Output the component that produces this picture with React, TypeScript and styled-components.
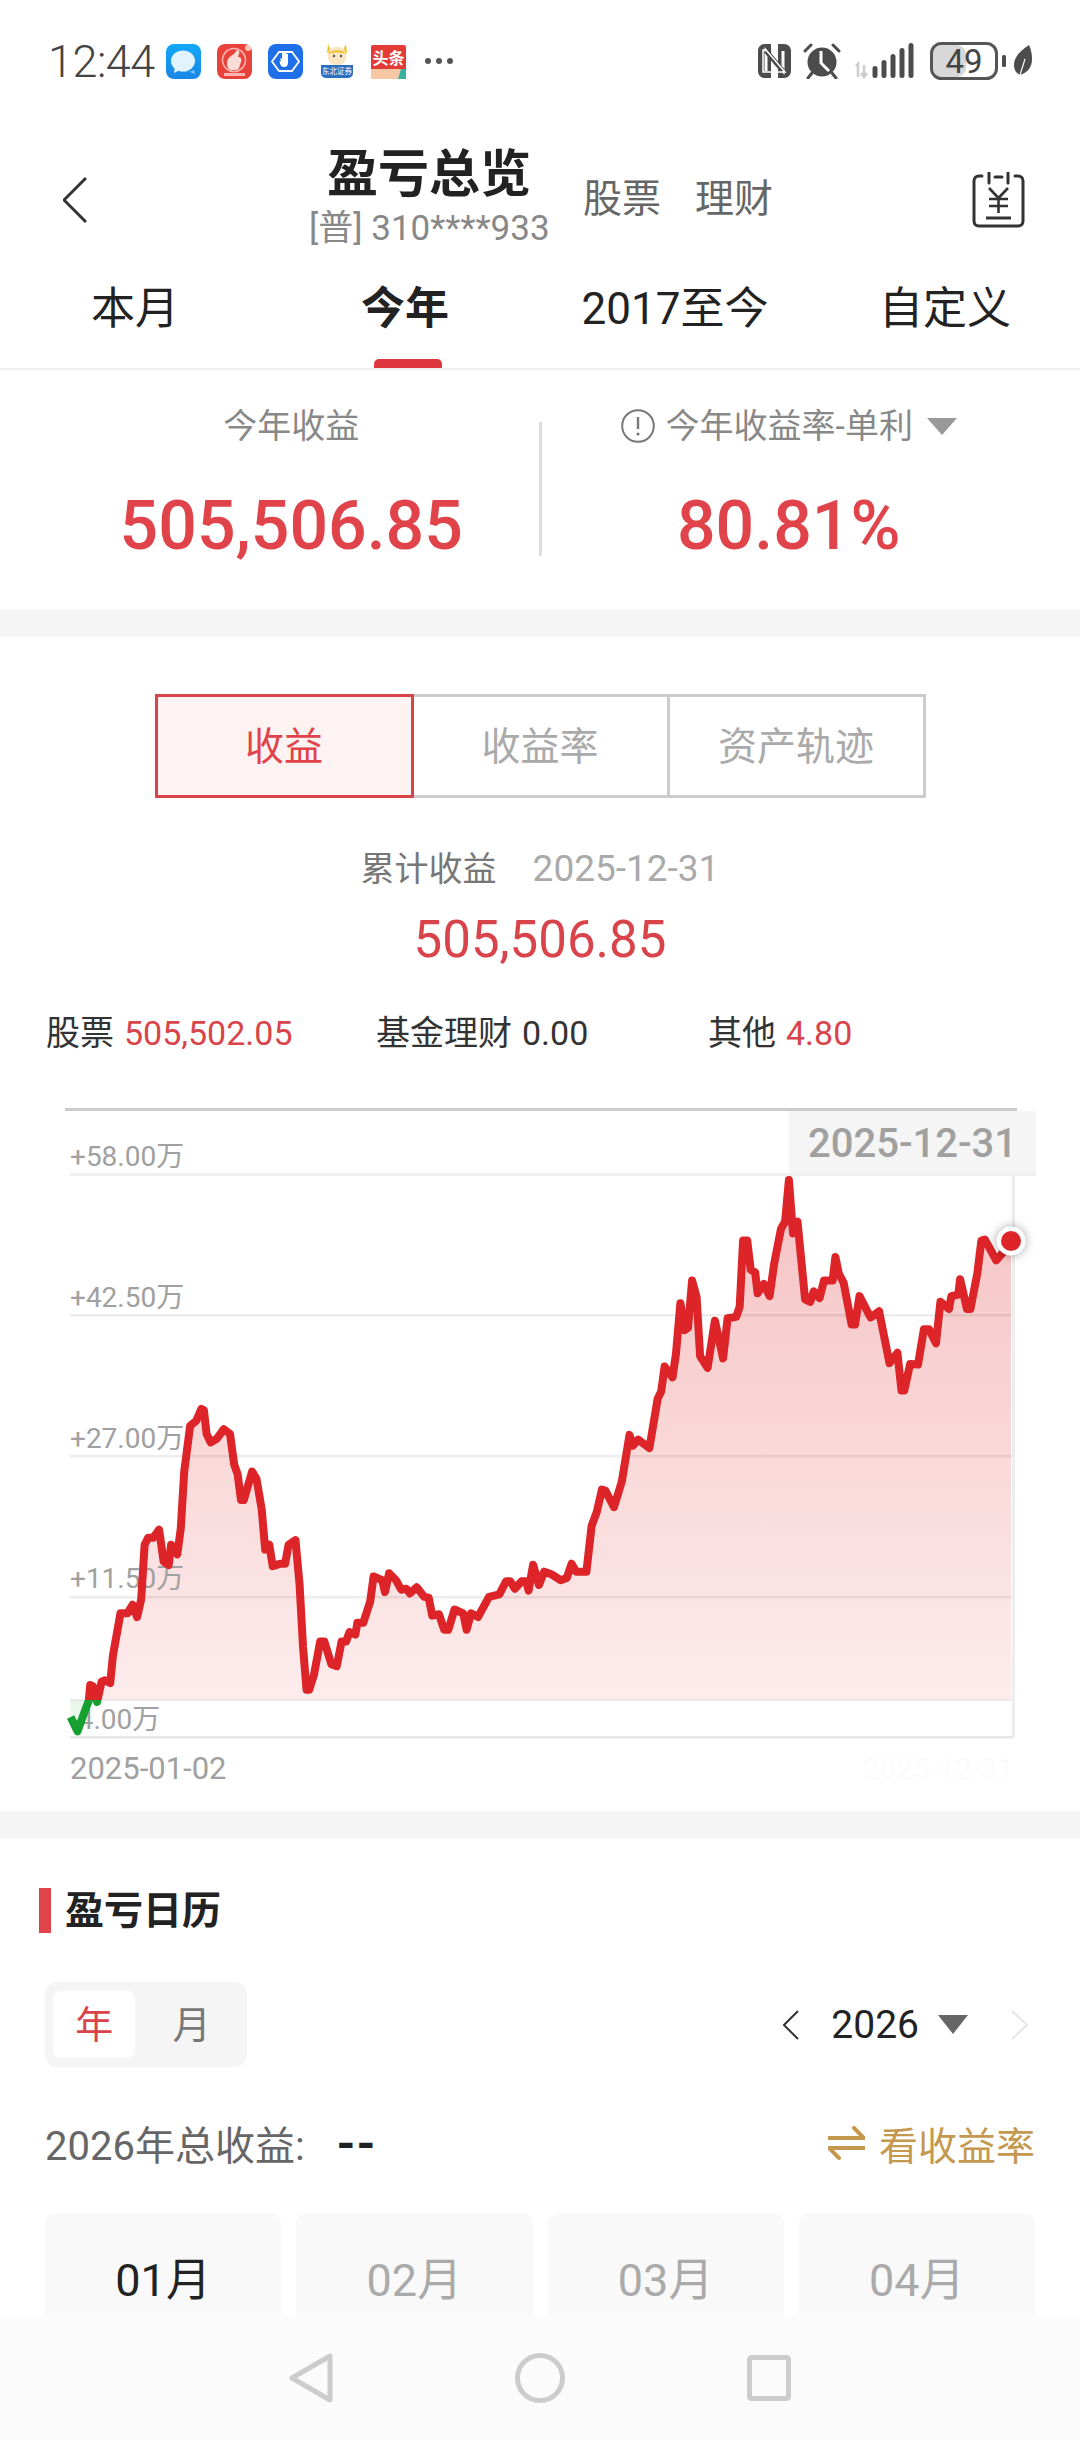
import React from 'react'
import styled, { createGlobalStyle } from 'styled-components'

const FONT = `Roboto, "Noto Sans CJK SC", sans-serif`

const GlobalStyle = createGlobalStyle`
  html, body { margin: 0; padding: 0; background: #fff; }
  * { box-sizing: border-box; }
  body { font-family: ${FONT}; }
`

// traced off the reference crops, x at 2.904 and y at 2.119 per px
const TRACE: number[][] = [
  [205,1350],[225,1380],[245,1340],[258,1315],[262,1282],[270,1285],[282,1318],[295,1275],[305,1272],[320,1278],[328,1220],[350,1130],[370,1130],[385,1112],[398,1138],[410,1100],[420,985],[430,970],[445,970],[462,953],[475,1020],[490,1028],[497,985],[515,1005],[525,950],[535,830],[552,733],[570,722],[585,697],[592,700],[600,750],[612,768],[630,760],[650,740],[668,750],[680,815],[690,835],[700,890],[708,890],[732,830],[745,845],[760,910],[770,995],[782,985],[792,1030],[815,1025],[828,1025],[838,985],[858,975],[870,1070],[880,1200],[890,1292],[898,1292],[912,1260],[930,1190],[942,1190],[962,1238],[978,1242],[992,1190],[1005,1190],[1015,1170],[1032,1175],[1038,1150],[1055,1150],[1075,1105],[1085,1052],[1110,1060],[1118,1085],[1130,1045],[1150,1060],[1165,1080],[1180,1078],[1190,1088],[1210,1075],[1232,1095],[1245,1097],[1255,1135],[1275,1132],[1290,1165],[1302,1165],[1320,1122],[1345,1130],[1355,1165],[1368,1130],[1388,1138],[1420,1095],[1450,1090],[1470,1062],[1482,1062],[1495,1078],[1515,1062],[1528,1062],[1535,1082],[1548,1027],[1565,1070],
  [1580,1042],[1603,1048],[1628,1060],[1646,1055],[1660,1025],[1673,1042],[1703,1042],[1718,945],[1733,915],[1748,868],[1758,870],[1783,905],[1806,850],[1828,752],[1838,775],[1853,762],[1868,770],[1886,780],[1910,675],[1920,660],[1930,607],[1953,630],[1963,580],[1976,473],[1988,530],[1998,525],[2010,425],[2023,460],[2033,585],[2055,610],[2076,510],[2088,550],[2100,590],[2113,505],[2138,502],[2148,480],[2158,340],[2170,340],[2180,402],[2193,408],[2200,452],[2218,432],[2235,458],[2248,390],[2268,315],[2280,300],[2291,212],[2303,325],[2316,300],[2338,465],[2353,470],[2363,448],[2380,462],[2393,425],[2418,425],[2426,375],[2436,410],[2450,430],[2473,518],[2483,518],[2496,458],[2528,503],[2553,490],[2583,600],[2606,578],[2618,658],[2626,658],[2643,602],[2666,603],[2683,528],[2698,528],[2718,558],[2731,470],[2756,485],[2763,458],[2783,455],[2788,422],[2808,485],[2818,485],[2838,410],[2850,340],[2860,338],[2873,355],[2893,382],[2913,365],[2936,342],
]
const linePoints = TRACE.map(([x, y]) => `${(x / 2.904).toFixed(1)},${(y / 2.119).toFixed(1)}`).join(' ')
const BASE_Y = 620
const END_X = 1011
const fillPoints = `${linePoints} ${END_X},${BASE_Y} 70,${BASE_Y}`

const GRID = [
  { y: 94, label: '+58.00万', ly: 86 },
  { y: 235, label: '+42.50万', ly: 227 },
  { y: 376, label: '+27.00万', ly: 368 },
  { y: 517, label: '+11.50万', ly: 508 },
]

const MONTHS = ['01月', '02月', '03月', '04月']

const Screen = styled.div`
  width: 1080px;
  height: 2440px;
  display: flex;
  flex-direction: column;
  overflow: hidden;
  background: #fff;
`
const Scroll = styled.div`
  flex: 1;
  min-height: 0;
  overflow: hidden;
`
const StatusBar = styled.div`
  height: 100px;
  padding: 22px 47px 0 48px;
  display: flex;
  align-items: center;
`
const Clock = styled.span`
  font-size: 45px;
  letter-spacing: -0.5px;
  color: #444;
  font-weight: 300;
  width: 118px;
`
const AppIcons = styled.div`
  display: flex;
  gap: 16px;
  align-items: center;
`
const More = styled.div`
  margin-left: 19px;
  display: flex;
  gap: 5px;
  i {
    width: 6px;
    height: 6px;
    border-radius: 50%;
    background: #555;
  }
`
const SystemIcons = styled.div`
  margin-left: auto;
  display: flex;
  align-items: center;
`
const Header = styled.div`
  height: 180px;
  padding: 20px 55px 0 63px;
  display: flex;
  align-items: center;
`
const BackBtn = styled.div`
  width: 246px;
  display: flex;
`
const TitleBlock = styled.div`
  width: 240px;
  text-align: center;
`
const Title = styled.div`
  font-size: 51px;
  line-height: 54px;
  font-weight: 700;
  color: #222;
`
const Account = styled.div`
  margin-top: 3px;
  font-size: 35px;
  line-height: 48px;
  color: #888;
  white-space: nowrap;
`
const HeaderLinks = styled.div`
  margin: 0 0 10px 34px;
  display: flex;
  gap: 34px;
`
const HeaderLink = styled.span`
  font-size: 39px;
  color: #666;
`
const HeaderAction = styled.div`
  margin-left: auto;
  display: flex;
`
const Tabs = styled.div`
  display: grid;
  grid-template-columns: repeat(4, 1fr);
  border-bottom: 2px solid #eee;
`
const Tab = styled.div<{ $active?: boolean }>`
  position: relative;
  height: 88px;
  line-height: 58px;
  text-align: center;
  font-size: 44px;
  color: #222;
  font-weight: ${p => (p.$active ? 700 : 400)};
  white-space: nowrap;
  ${p =>
    p.$active &&
    `&::after {
      content: '';
      position: absolute;
      left: 50%;
      bottom: 0;
      width: 68px;
      height: 9px;
      margin-left: -31px;
      background: #e0363e;
      border-radius: 5px 5px 0 0;
    }`}
`
const Summary = styled.div`
  height: 239px;
  padding: 33px 44px 0 44px;
  display: flex;
  align-items: flex-start;
`
const SummaryCol = styled.div`
  flex: 1;
  text-align: center;
`
const SummaryDivider = styled.div`
  width: 3px;
  height: 134px;
  margin-top: 19px;
  background: #ddd;
`
const SummaryLabel = styled.div`
  height: 46px;
  line-height: 46px;
  font-size: 34px;
  color: #888;
  display: flex;
  align-items: center;
  justify-content: center;
`
const SummaryValue = styled.div`
  margin-top: 37px;
  line-height: 80px;
  font-size: 68px;
  font-weight: 500;
  color: #e0434a;
`
const Band = styled.div`
  height: 28px;
  background: #f5f5f5;
`
const Caret = styled.span<{ $w: number; $h: number; $color: string; $ml?: number }>`
  display: inline-block;
  width: 0;
  height: 0;
  margin-left: ${p => p.$ml ?? 0}px;
  border-left: ${p => p.$w / 2}px solid transparent;
  border-right: ${p => p.$w / 2}px solid transparent;
  border-top: ${p => p.$h}px solid ${p => p.$color};
`
const Segment = styled.div`
  width: 771px;
  height: 104px;
  margin: 57px auto 0;
  display: flex;
`
const SegmentItem = styled.div<{ $active?: boolean }>`
  flex: 1;
  margin-left: -3px;
  padding-bottom: 7px;
  display: flex;
  align-items: center;
  justify-content: center;
  font-size: 39px;
  border: 3px solid ${p => (p.$active ? '#d9444a' : '#ccc')};
  background: ${p => (p.$active ? '#fdf3f2' : '#fff')};
  color: ${p => (p.$active ? '#e0434a' : '#aaa')};
  position: relative;
  z-index: ${p => (p.$active ? 1 : 0)};
  &:first-child {
    margin-left: 0;
  }
`
const CumRow = styled.div`
  margin-top: 49px;
  line-height: 44px;
  display: flex;
  justify-content: center;
  align-items: center;
  gap: 36px;
`
const CumLabel = styled.span`
  font-size: 34px;
  color: #777;
`
const CumDate = styled.span`
  font-size: 37px;
  color: #aaa;
`
const CumValue = styled.div`
  margin-top: 14px;
  line-height: 70px;
  font-size: 51px;
  text-align: center;
  color: #d9444a;
`
const Breakdown = styled.div`
  margin-top: 36px;
  padding-left: 46px;
  display: grid;
  grid-template-columns: 330px 332px 1fr;
  line-height: 44px;
  font-size: 34px;
`
const BreakdownItem = styled.div`
  display: flex;
  gap: 10px;
  color: #333;
`
const BreakdownValue = styled.span<{ $red?: boolean }>`
  color: ${p => (p.$red ? '#d9444a' : '#333')};
`
const ChartBox = styled.div`
  margin-top: 25px;
  height: 731px;
  svg {
    display: block;
  }
`
const AxisText = styled.text<{ $size?: number }>`
  font-family: ${FONT};
  font-size: ${p => p.$size ?? 28}px;
  fill: #a0a0a0;
`
const TipText = styled.text`
  font-family: ${FONT};
  font-size: 40px;
  font-weight: 500;
  fill: #a0a0a0;
  text-anchor: end;
`
const Watermark = styled.text`
  font-family: ${FONT};
  font-size: 30px;
  fill: #fbfbfb;
  text-anchor: end;
`
const Calendar = styled.div`
  padding: 48px 45px 0;
`
const SectionHead = styled.div`
  margin-left: -6px;
  display: flex;
  align-items: center;
  gap: 14px;
  height: 46px;
`
const SectionBar = styled.div`
  width: 12px;
  height: 45px;
  background: #e0434a;
`
const SectionTitle = styled.div`
  padding-bottom: 7px;
  font-size: 39px;
  font-weight: 700;
  color: #222;
`
const Controls = styled.div`
  margin-top: 49px;
  height: 85px;
  display: flex;
  align-items: center;
  justify-content: space-between;
`
const Switch = styled.div`
  width: 202px;
  height: 85px;
  padding: 9px 8px;
  background: #f5f5f5;
  border-radius: 12px;
  display: flex;
`
const SwitchItem = styled.div<{ $active?: boolean }>`
  width: ${p => (p.$active ? 87 : 100)}px;
  margin-left: ${p => (p.$active ? 0 : 9)}px;
  padding-bottom: 6px;
  display: flex;
  align-items: center;
  justify-content: center;
  border-radius: 8px;
  font-size: 38px;
  background: ${p => (p.$active ? '#fff' : 'transparent')};
  color: ${p => (p.$active ? '#d9444a' : '#777')};
`
const YearPicker = styled.div`
  margin-right: 7px;
  display: flex;
  align-items: center;
`
const YearValue = styled.span`
  margin-left: 32px;
  font-size: 39px;
  color: #222;
`
const NextBtn = styled.div`
  margin-left: 43px;
  display: flex;
`
const TotalRow = styled.div`
  margin-top: 51px;
  height: 50px;
  display: flex;
  align-items: center;
  justify-content: space-between;
`
const TotalLabel = styled.div`
  font-size: 40px;
  color: #666;
  display: flex;
  align-items: center;
`
const TotalValue = styled.b`
  margin-left: 32px;
  font-size: 48px;
  letter-spacing: 1px;
  color: #222;
`
const RateLink = styled.div`
  display: flex;
  align-items: center;
  gap: 14px;
  font-size: 39px;
  color: #c4994f;
`
const MonthGrid = styled.div`
  margin-top: 45px;
  display: grid;
  grid-template-columns: repeat(4, 1fr);
  gap: 15px;
`
const MonthCard = styled.div<{ $active?: boolean }>`
  height: 190px;
  padding-top: 40px;
  line-height: 56px;
  text-align: center;
  font-size: 45px;
  background: #f9f9f9;
  border-radius: 10px;
  color: ${p => (p.$active ? '#222' : '#aaa')};
`
const NavBar = styled.div`
  height: 124px;
  flex-shrink: 0;
  background: #fbfbfb;
  display: flex;
  align-items: center;
  justify-content: center;
  gap: 182px;
`

const MessageIcon = () => (
  <svg width="35" height="35" viewBox="0 0 35 35">
    <defs>
      <linearGradient id="msgBg" x1="0" y1="0" x2="0" y2="1">
        <stop offset="0" stopColor="#12a8f6" />
        <stop offset="1" stopColor="#1a86e6" />
      </linearGradient>
    </defs>
    <rect width="35" height="35" rx="8" fill="url(#msgBg)" />
    <path d="M14 27c6 2 11 1 14-1l1 4-5-2" fill="#7cc6f5" />
    <ellipse cx="17" cy="17" rx="12" ry="10.5" fill="#e2f3fd" />
    <path d="M9 23l-1 6 6-3z" fill="#e2f3fd" />
  </svg>
)
const ThumbIcon = () => (
  <svg width="35" height="35" viewBox="0 0 35 35">
    <rect width="35" height="35" rx="8" fill="#e9423b" />
    <circle cx="17" cy="16" r="11.5" fill="none" stroke="#f7b5ae" strokeWidth="1.6" />
    <path d="M10 19c0-5 4-7 7-9l3-4c2 0 3 2 2 4l-1 3c3 0 4 2 3 5l-2 6c-1 2-3 2-5 2h-3c-2 0-4-3-4-7z" fill="#fbdcd4" />
    <circle cx="31" cy="4" r="3" fill="#f6c7b8" />
    <rect x="7" y="29" width="21" height="3" fill="#f7b5ae" />
  </svg>
)
const HandIcon = () => (
  <svg width="35" height="35" viewBox="0 0 35 35">
    <rect width="35" height="35" rx="8" fill="#1f70e8" />
    <path d="M11 8h13l7 9.500-7 9.500H11L4 17.500z" fill="none" stroke="#fff" strokeWidth="1.8" />
    <path d="M13 17l-1-3 2 1V9h1.500v5V8h1.500v6V8.500h1.500V14 10h1.500v8c0 3-1 5-4 5-3 0-4-3-4.500-6z" fill="#fff" />
  </svg>
)
const CartoonIcon = () => (
  <svg width="36" height="36" viewBox="0 0 36 36">
    <path d="M9 1l3 6 12 0 3-6 1 9H8z" fill="#f1c330" />
    <circle cx="18" cy="13" r="9.500" fill="#fbe6c4" />
    <path d="M9 11c2-5 16-5 18 0-5-2-13-2-18 0z" fill="#f1c330" />
    <circle cx="15" cy="13" r="1.200" fill="#555" />
    <circle cx="22" cy="13" r="1.200" fill="#555" />
    <path d="M2 22h32v8c0 4-3 5-6 5H8c-3 0-6-1-6-5z" fill="#2a6fc0" />
    <text x="18" y="31" textAnchor="middle" fontSize="7.500" fill="#fff" fontFamily={FONT}>东北证券</text>
  </svg>
)
const ToutiaoIcon = () => (
  <svg width="35" height="35" viewBox="0 0 35 35">
    <rect y="1" width="35" height="34" rx="2" fill="#e33b36" />
    <rect y="25" width="35" height="10" fill="#f7c7a3" />
    <path d="M27 35l3-10h5v10z" fill="#34b3a0" />
    <text x="17.500" y="20" textAnchor="middle" fontSize="16" fontWeight="700" fill="#fff" fontFamily={FONT}>头条</text>
  </svg>
)
const NfcIcon = () => (
  <svg width="33" height="34" viewBox="0 0 33 34" style={{ marginRight: 12 }}>
    <path d="M7 0h6v34H7c-4 0-7-3-7-7V7c0-4 3-7 7-7zM20 0h6c4 0 7 3 7 7v20c0 4-3 7-7 7h-6z" fill="#4c4c4c" />
    <path d="M8 27V7l17 20V7" fill="none" stroke="#fff" strokeWidth="3" />
    <path d="M8 7l17 20" stroke="#4c4c4c" strokeWidth="5" />
    <path d="M5 28V6h3l19 22h-3z" fill="none" stroke="#fff" strokeWidth="1.500" />
  </svg>
)
const AlarmIcon = () => (
  <svg width="38" height="36" viewBox="0 0 38 36" style={{ marginRight: 12 }}>
    <circle cx="19" cy="19" r="14.500" fill="#4c4c4c" />
    <path d="M2 8l6-6M36 8l-6-6M9 30l-4 5M29 30l4 5" stroke="#4c4c4c" strokeWidth="3" strokeLinecap="round" />
    <path d="M18 8v12l8 8" fill="none" stroke="#fff" strokeWidth="3" />
  </svg>
)
const SignalIcon = () => (
  <svg width="64" height="36" viewBox="0 0 64 36" style={{ marginRight: 13 }}>
    <path d="M3 23l2-2v13M11 22v12m-3-4l3 4 3-4" stroke="#ccc" strokeWidth="2.500" fill="none" />
    {[[22, 12], [31, 18], [40, 24], [49, 30], [58, 35]].map(([x, h]) => (
      <rect key={x} x={x - 2.5} y={35 - h} width="5" height={h} rx="2.500" fill="#4c4c4c" />
    ))}
  </svg>
)
const BatteryIcon = () => (
  <svg width="103" height="38" viewBox="0 0 103 38">
    <rect x="3" y="3" width="33" height="32" rx="9" fill="#d8d8d8" />
    <rect x="1.500" y="1.500" width="65" height="35" rx="10" fill="none" stroke="#555" strokeWidth="3" />
    <text x="34" y="31" textAnchor="middle" fontSize="33" fill="#444" fontFamily={FONT}>49</text>
    <rect x="72" y="13" width="4" height="12" rx="1.500" fill="#4c4c4c" />
    <path d="M99 3C90 9 84 15 84 23c0 5 2 8 6 10 9-3 12-9 12-16 0-5-1-10-3-14z" fill="#4c4c4c" />
    <path d="M90 33l5-16" stroke="#fff" strokeWidth="1.200" />
  </svg>
)
const Chevron = ({ w, h, color, stroke, dir = 'left' }: { w: number; h: number; color: string; stroke: number; dir?: 'left' | 'right' }) => (
  <svg width={w} height={h} viewBox={`0 0 ${w} ${h}`}>
    <polyline
      points={dir === 'left' ? `${w - 1},1 1,${h / 2} ${w - 1},${h - 1}` : `1,1 ${w - 1},${h / 2} 1,${h - 1}`}
      fill="none"
      stroke={color}
      strokeWidth={stroke}
    />
  </svg>
)
const LedgerIcon = () => (
  <svg width="53" height="56" viewBox="0 0 53 56">
    <path d="M10 4H7C4 4 2 6 2 9v40c0 3 2 5 5 5h39c3 0 5-2 5-5V9c0-3-2-5-5-5h-3" fill="none" stroke="#333" strokeWidth="3" strokeLinecap="round" />
    <path d="M17 1v10M36 1v10M23 5h7" stroke="#333" strokeWidth="3" strokeLinecap="round" fill="none" />
    <path d="M17 16l9.500 10L36 16M17 27h19M17 34h19M26.500 26v15" stroke="#333" strokeWidth="2.600" fill="none" />
    <path d="M14 46h25" stroke="#333" strokeWidth="3" />
  </svg>
)
const InfoIcon = () => (
  <svg width="34" height="34" viewBox="0 0 34 34" style={{ marginRight: 11 }}>
    <circle cx="17" cy="17" r="15.800" fill="none" stroke="#777" strokeWidth="2" />
    <path d="M17 8v12" stroke="#777" strokeWidth="2.400" />
    <circle cx="17" cy="25" r="1.600" fill="#777" />
  </svg>
)
const SwapIcon = () => (
  <svg width="37" height="34" viewBox="0 0 37 34">
    <path d="M1 12h35L26 2M36 22H1l10 10" fill="none" stroke="#c4994f" strokeWidth="4" strokeLinejoin="round" strokeLinecap="round" />
  </svg>
)

const Chart = () => (
  <svg width="1080" height="731" viewBox="0 0 1080 731">
    <defs>
      <linearGradient id="areaFill" gradientUnits="userSpaceOnUse" x1="0" y1="100" x2="0" y2={BASE_Y}>
        <stop offset="0" stopColor="#f5c2c3" />
        <stop offset="1" stopColor="#fdecec" />
      </linearGradient>
      <clipPath id="aboveBase">
        <rect x="0" y="0" width="1080" height={BASE_Y} />
      </clipPath>
      <clipPath id="belowBase">
        <rect x="0" y={BASE_Y} width="1080" height="111" />
      </clipPath>
      <filter id="dotShadow" x="-60%" y="-60%" width="220%" height="220%">
        <feGaussianBlur stdDeviation="4" />
      </filter>
    </defs>
    <polygon points={fillPoints} fill="url(#areaFill)" clipPath="url(#aboveBase)" />
    <polygon points={fillPoints} fill="#e9f6ea" clipPath="url(#belowBase)" />
    <rect x="65" y="28" width="952" height="3" fill="#ccc" />
    <rect x="789" y="31" width="247" height="62" fill="#f5f5f5" />
    {GRID.map(g => (
      <rect key={g.y} x="70" y={g.y - 1} width={g.y === 94 ? 719 : 943} height="2.500" fill="#000" fillOpacity="0.07" />
    ))}
    <rect x="70" y="93" width="966" height="3" fill="#efefef" />
    <rect x="70" y={BASE_Y - 1} width="943" height="2" fill="#000" fillOpacity="0.06" />
    <rect x="70" y="656" width="944" height="2.500" fill="#e8e8e8" />
    <rect x="1012" y="95" width="3" height="563" fill="#ededed" />
    {GRID.map(g => (
      <AxisText key={g.label} x="70" y={g.ly}>{g.label}</AxisText>
    ))}
    <AxisText x="70" y="649">-4.00万</AxisText>
    <AxisText x="70" y="699" $size={31}>2025-01-02</AxisText>
    <Watermark x="1014" y="699">2025-12-31</Watermark>
    <TipText x="1017" y="77">2025-12-31</TipText>
    <polyline points={linePoints} fill="none" stroke="#dd2428" strokeWidth="8" strokeLinejoin="round" clipPath="url(#aboveBase)" />
    <polyline points={linePoints} fill="none" stroke="#15a02f" strokeWidth="8" strokeLinejoin="round" clipPath="url(#belowBase)" />
    <circle cx={END_X} cy="161" r="16" fill="#000" fillOpacity="0.25" filter="url(#dotShadow)" />
    <circle cx={END_X} cy="161" r="14.500" fill="#fff" />
    <circle cx={END_X} cy="161" r="10" fill="#dd2428" />
  </svg>
)

export default function App() {
  return (
    <Screen>
      <GlobalStyle />
      <Scroll>
        <StatusBar>
          <Clock>12:44</Clock>
          <AppIcons>
            <MessageIcon />
            <ThumbIcon />
            <HandIcon />
            <CartoonIcon />
            <ToutiaoIcon />
          </AppIcons>
          <More>
            <i />
            <i />
            <i />
          </More>
          <SystemIcons>
            <NfcIcon />
            <AlarmIcon />
            <SignalIcon />
            <BatteryIcon />
          </SystemIcons>
        </StatusBar>

        <Header>
          <BackBtn>
            <Chevron w={24} h={46} color="#333" stroke={3} />
          </BackBtn>
          <TitleBlock>
            <Title>盈亏总览</Title>
            <Account>[普] 310****933</Account>
          </TitleBlock>
          <HeaderLinks>
            <HeaderLink>股票</HeaderLink>
            <HeaderLink>理财</HeaderLink>
          </HeaderLinks>
          <HeaderAction>
            <LedgerIcon />
          </HeaderAction>
        </Header>

        <Tabs>
          <Tab>本月</Tab>
          <Tab $active>今年</Tab>
          <Tab>2017至今</Tab>
          <Tab>自定义</Tab>
        </Tabs>

        <Summary>
          <SummaryCol>
            <SummaryLabel>今年收益</SummaryLabel>
            <SummaryValue>505,506.85</SummaryValue>
          </SummaryCol>
          <SummaryDivider />
          <SummaryCol>
            <SummaryLabel>
              <InfoIcon />
              今年收益率-单利
              <Caret $w={30} $h={17} $color="#999" $ml={14} />
            </SummaryLabel>
            <SummaryValue>80.81%</SummaryValue>
          </SummaryCol>
        </Summary>

        <Band />

        <Segment>
          <SegmentItem $active>收益</SegmentItem>
          <SegmentItem>收益率</SegmentItem>
          <SegmentItem>资产轨迹</SegmentItem>
        </Segment>

        <CumRow>
          <CumLabel>累计收益</CumLabel>
          <CumDate>2025-12-31</CumDate>
        </CumRow>
        <CumValue>505,506.85</CumValue>

        <Breakdown>
          <BreakdownItem>
            股票<BreakdownValue $red>505,502.05</BreakdownValue>
          </BreakdownItem>
          <BreakdownItem>
            基金理财<BreakdownValue>0.00</BreakdownValue>
          </BreakdownItem>
          <BreakdownItem>
            其他<BreakdownValue $red>4.80</BreakdownValue>
          </BreakdownItem>
        </Breakdown>

        <ChartBox>
          <Chart />
        </ChartBox>

        <Band />

        <Calendar>
          <SectionHead>
            <SectionBar />
            <SectionTitle>盈亏日历</SectionTitle>
          </SectionHead>

          <Controls>
            <Switch>
              <SwitchItem $active>年</SwitchItem>
              <SwitchItem>月</SwitchItem>
            </Switch>
            <YearPicker>
              <Chevron w={16} h={30} color="#333" stroke={2} />
              <YearValue>2026</YearValue>
              <Caret $w={31} $h={19} $color="#666" $ml={19} />
              <NextBtn>
                <Chevron w={17} h={30} color="#e5e5e5" stroke={2} dir="right" />
              </NextBtn>
            </YearPicker>
          </Controls>

          <TotalRow>
            <TotalLabel>
              2026年总收益:
              <TotalValue>--</TotalValue>
            </TotalLabel>
            <RateLink>
              <SwapIcon />
              看收益率
            </RateLink>
          </TotalRow>

          <MonthGrid>
            {MONTHS.map((m, i) => (
              <MonthCard key={m} $active={i === 0}>{m}</MonthCard>
            ))}
          </MonthGrid>
        </Calendar>
      </Scroll>

      <NavBar>
        <svg width="44" height="50" viewBox="0 0 44 50">
          <path d="M41 3L3 25l38 22z" fill="none" stroke="#ccc" strokeWidth="5" strokeLinejoin="round" />
        </svg>
        <svg width="50" height="50" viewBox="0 0 50 50">
          <circle cx="25" cy="25" r="22.500" fill="none" stroke="#ccc" strokeWidth="5" />
        </svg>
        <svg width="44" height="46" viewBox="0 0 44 46">
          <rect x="2.500" y="2.500" width="39" height="41" rx="2" fill="none" stroke="#ccc" strokeWidth="5" />
        </svg>
      </NavBar>
    </Screen>
  )
}
